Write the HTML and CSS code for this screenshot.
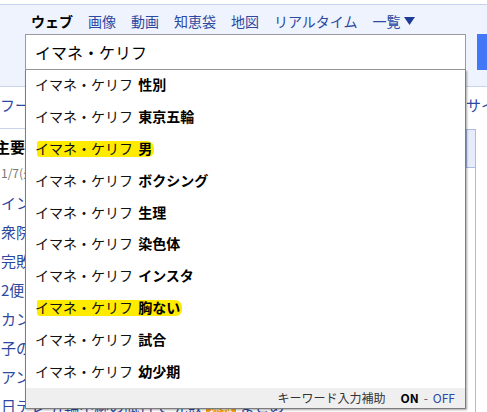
FILE: index.html
```html
<!DOCTYPE html>
<html lang="ja">
<head>
<meta charset="utf-8">
<link rel="stylesheet" href="styles.css">
</head>
<body>
<div class="page">
  <header class="header">
    <nav class="tabs">
      <span class="tab on">ウェブ</span>
      <a class="tab">画像</a>
      <a class="tab">動画</a>
      <a class="tab">知恵袋</a>
      <a class="tab">地図</a>
      <a class="tab">リアルタイム</a>
      <a class="tab more">一覧<svg class="caret" width="11" height="8" viewBox="0 0 11 8"><path d="M0 0H11L5.5 8Z" fill="#1e3c96"/></svg></a>
    </nav>
    <div class="searchrow">
      <div class="search">
        <div class="field">イマネ・ケリフ</div>
        <div class="suggest">
          <div class="row"><span>イマネ・ケリフ <b>性別</b></span></div>
          <div class="row"><span>イマネ・ケリフ <b>東京五輪</b></span></div>
          <div class="row"><span class="mark">イマネ・ケリフ <b>男</b></span></div>
          <div class="row"><span>イマネ・ケリフ <b>ボクシング</b></span></div>
          <div class="row"><span>イマネ・ケリフ <b>生理</b></span></div>
          <div class="row"><span>イマネ・ケリフ <b>染色体</b></span></div>
          <div class="row"><span>イマネ・ケリフ <b>インスタ</b></span></div>
          <div class="row"><span class="mark">イマネ・ケリフ <b>胸ない</b></span></div>
          <div class="row"><span>イマネ・ケリフ <b>試合</b></span></div>
          <div class="row"><span>イマネ・ケリフ <b>幼少期</b></span></div>
          <div class="foot">
            <span class="lbl">キーワード入力補助</span>
            <b class="onoff">ON</b><span class="dash">-</span><span class="off">OFF</span>
          </div>
        </div>
      </div>
      <div class="btn"></div>
    </div>
  </header>
  <div class="body">
    <div class="main">
      <div class="subnav">フード・ライフ</div>
      <div class="content">
        <div class="ttl">主要</div>
        <div class="date">1/7(火) 12:00更新</div>
        <ul class="links">
          <li>インドで大規模な停電</li>
          <li>衆院予算委で論戦続く</li>
          <li>完敗の代表 監督が謝罪</li>
          <li>2便が欠航 大雪の影響</li>
          <li>カンボジアで邦人保護</li>
          <li>子の<i>名前</i> 読み方の規定</li>
          <li>アンケート結果まとめ</li>
          <li>日テレ 五輪中継の試合で 完敗 <span class="tag">速報</span> まとめ</li>
        </ul>
      </div>
    </div>
    <div class="side">
      <div class="sidenav">サイ</div>
      <div class="sidetab"></div>
      <div class="sideline"></div>
    </div>
  </div>
</div>
</body>
</html>
```

FILE: styles.css
```css
html, body {
  margin: 0;
  padding: 0;
  overflow: hidden;
  background: #fff;
}
body {
  font-family: "Noto Sans CJK JP", "Noto Sans", sans-serif;
  color: #000;
}
.page {
  width: 487px;
  height: 412px;
  overflow: hidden;
}
.header {
  margin-top: 4px;
  border-top: 1px solid #c6d2ee;
  border-bottom: 1px solid #c9d4ec;
  background: #eef3fd;
  height: 81px;
}
.tabs {
  display: flex;
  gap: 15px;
  padding-left: 31px;
  margin-top: 6px;
  height: 20px;
  font-size: 14px;
  line-height: 20px;
}
.tab {
  color: #2c48a0;
  white-space: nowrap;
}
.tab.on {
  color: #000;
  font-weight: bold;
}
.more {
  display: flex;
  align-items: center;
}
.caret {
  margin-left: 3px;
}
.searchrow {
  display: flex;
  gap: 11px;
  padding-left: 25px;
  margin-top: 3px;
}
.search {
  position: relative;
  box-sizing: border-box;
  width: 441px;
  flex: none;
  height: 36px;
  border: 1px solid #9a9a9a;
  background: #fff;
}
.field {
  padding-left: 9px;
  font-size: 16px;
  line-height: 34px;
  color: #000;
}
.btn {
  width: 40px;
  height: 36px;
  flex: none;
  background: #4278f6;
}
.suggest {
  position: absolute;
  top: 100%;
  left: -1px;
  right: -1px;
  margin-top: 1px;
  background: #fff;
  border: 1px solid #7d7d7d;
  border-top: none;
  box-shadow: 1px 1px 2px rgba(0, 0, 0, 0.35);
  z-index: 5;
}
.row {
  box-sizing: border-box;
  height: 31.8px;
  padding-bottom: 3px;
  display: flex;
  align-items: center;
  padding-left: 9px;
  font-size: 14px;
  color: #111;
  white-space: nowrap;
}
.row b {
  margin-left: 2px;
  color: #000;
}
.mark {
  position: relative;
  z-index: 0;
}
.mark::before {
  content: "";
  position: absolute;
  left: 2px;
  right: -2px;
  top: 3px;
  bottom: 1px;
  background: #ffeb00;
  border-radius: 2px 7px 6px 3px;
  z-index: -1;
}
.foot {
  height: 20px;
  background: #efefef;
  display: flex;
  align-items: center;
  justify-content: flex-end;
  padding-right: 10px;
  font-size: 12px;
  color: #333;
  white-space: nowrap;
}
.lbl {
  margin-right: 15px;
}
.onoff {
  color: #000;
}
.dash {
  color: #555;
  margin: 0 5px;
}
.off {
  color: #2c48a0;
}
.body {
  display: flex;
}
.main {
  width: 466px;
  flex: none;
}
.subnav {
  height: 20px;
  padding: 8px 0 13px 0;
  border-bottom: 1px solid #c9d4ec;
  font-size: 15px;
  line-height: 20px;
  color: #2c48a0;
  white-space: nowrap;
}
.content {
  font-size: 15px;
}
.ttl {
  margin-top: 8px;
  margin-left: -5px;
  line-height: 20px;
  font-weight: bold;
  color: #000;
}
.date {
  margin-top: 6px;
  margin-left: 1px;
  line-height: 20px;
  font-size: 12px;
  color: #777;
  white-space: nowrap;
}
.links {
  list-style: none;
  margin: 5px 0 0 0;
  padding: 0 0 0 1px;
}
.links li {
  line-height: 29px;
  height: 29px;
  color: #2c48a0;
  white-space: nowrap;
}
.tag {
  background: #f7a21b;
  color: #fff;
  font-size: 12px;
  padding: 0 3px;
}
.side {
  width: 21px;
  flex: none;
  display: flex;
  flex-direction: column;
}
.sidenav {
  height: 20px;
  padding: 8px 0 13px 0;
  font-size: 15px;
  line-height: 20px;
  color: #2c48a0;
  white-space: nowrap;
  overflow: hidden;
  margin-bottom: 1px;
}
.sidetab {
  box-sizing: border-box;
  width: 10px;
  height: 39px;
  background: #e6ecfc;
  border: 1px solid #a9bbe6;
}
.sideline {
  width: 10px;
  height: 300px;
  box-sizing: border-box;
  border-right: 1px solid #a9bbe6;
}
```
